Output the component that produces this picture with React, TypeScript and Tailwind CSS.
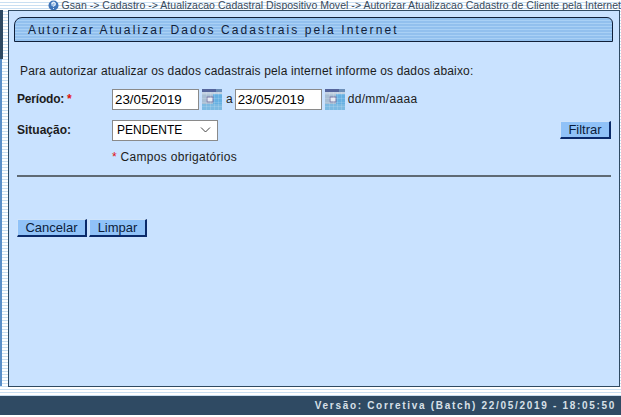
const sans = "font-['Liberation_Sans',Arial,sans-serif]";

function CalendarIcon() {
  return (
    <svg width="20" height="21" viewBox="0 0 20 21" className="shrink-0">
      <rect x="0" y="0" width="20" height="21" fill="#8fc6e8" />
      <rect x="0" y="0" width="14" height="3" fill="#55659c" />
      <rect x="14" y="0" width="6" height="3" fill="#6d8fb8" />
      <rect x="0" y="3" width="20" height="2" fill="#c4d2e2" />
      <rect x="0" y="5" width="11" height="16" fill="#a9bfd4" />
      <rect x="11" y="5" width="9" height="16" fill="#66b0e2" />
      <rect x="0" y="15" width="20" height="6" fill="#7cbae2" />
      <rect x="5" y="8" width="6" height="5" fill="#e6ebf4" stroke="#7476a4" strokeWidth="1" />
      <path d="M0 5.5h20M0 9.5h20M0 13.5h20M0 17.5h20M4.5 3v18M8.5 3v18M12.5 3v18M16.5 3v18" stroke="#ffffff" strokeOpacity="0.14" strokeWidth="1" />
    </svg>
  );
}

function DateInput() {
  return (
    <input
      readOnly
      value="23/05/2019"
      className={`${sans} w-[87px] h-[21px] bg-white border border-[#8a8a8a] px-[2px] text-[13.33px] text-black outline-none`}
    />
  );
}

function Btn({ children, w }: { children: string; w: string }) {
  return (
    <button
      className={`${sans} ${w} h-[18px] flex items-center justify-center bg-[#90c2f8] border-t border-l border-t-[#cfe4fb] border-l-[#cfe4fb] border-r-[2px] border-b-[2px] border-r-[#0a2a6a] border-b-[#0a2a6a] text-[13px] text-[#0c1c3a]`}
    >
      {children}
    </button>
  );
}

export default function App() {
  return (
    <div className={`${sans} w-[621px] h-[417px] flex flex-col overflow-hidden bg-white`}>
      <div className="h-[396px] flex flex-col bg-[repeating-linear-gradient(to_bottom,#ffffff_0,#ffffff_2px,#c9dff2_2px,#c9dff2_3px)]">
        <div className="h-[10px] flex items-center justify-end gap-[3px] whitespace-nowrap text-[#3a4a5a]">
          <svg width="11" height="11" viewBox="0 0 11 11" className="shrink-0">
            <circle cx="5.5" cy="5.5" r="5" fill="#3f74b8" />
            <circle cx="5.5" cy="4" r="2.5" fill="#9fc0e6" />
            <path d="M4 4a1.6 1.6 0 1 1 2.3 1.4c-.5.3-.8.5-.8 1.1M5.5 8v.8" stroke="#fff" strokeWidth="1" fill="none" />
          </svg>
          <span className="text-[10.5px] tracking-[0.035px] leading-[10px]">
            Gsan -&gt; Cadastro -&gt; Atualizacao Cadastral Dispositivo Movel -&gt; Autorizar Atualizacao Cadastro de Cliente pela Internet
          </span>
        </div>
        <div className="flex-1 flex min-h-0">
          <div className="w-[8px] pb-[10px] flex flex-col">
            <div className="w-[3px] h-[49px] bg-[#2f4a63]" />
            <div className="w-[2px] flex-1 bg-[#5b8fc8]" />
          </div>
          <div className="w-[612px] h-[377px] border border-[#2f4a63] bg-[#c9e2ff] pl-[5px] pr-[6px] pt-[6px]">
            <div className="h-[25px] flex items-center pl-[13px] border border-[#10203a] rounded-tl-[8px] rounded-tr-[6px] bg-[repeating-linear-gradient(to_bottom,#92c0ee_0,#92c0ee_2px,#a9d0f5_2px,#a9d0f5_3px)] text-[12px] tracking-[2.09px] text-[#10203a]">
              Autorizar Atualizar Dados Cadastrais pela Internet
            </div>
            <p className="mt-[22px] ml-[6px] h-[14px] leading-[14px] text-[12px] tracking-[0.15px] text-[#1c1c1c]">
              Para autorizar atualizar os dados cadastrais pela internet informe os dados abaixo:
            </p>
            <div className="mt-[10px] flex items-center h-[22px]">
              <div className="w-[95px] ml-[3px] text-[12px] font-bold tracking-[-0.2px] text-[#1c1c1c]">
                Período:<span className="ml-[3px] text-[#e01010]">*</span>
              </div>
              <DateInput />
              <div className="w-[3px]" />
              <CalendarIcon />
              <span className="ml-[4px] mr-[2px] text-[12px] text-[#1c1c1c]">a</span>
              <DateInput />
              <div className="w-[3px]" />
              <CalendarIcon />
              <span className="ml-[3px] text-[12px] tracking-[0.3px] text-[#1c1c1c]">dd/mm/aaaa</span>
            </div>
            <div className="mt-[9px] flex items-center h-[22px]">
              <div className="w-[95px] ml-[3px] text-[12px] font-bold text-[#1c1c1c]">Situação:</div>
              <div className="w-[106px] h-[21px] bg-white border border-[#8a8a8a] flex items-center justify-between pl-[4px] pr-[6px] text-[12px] text-black">
                PENDENTE
                <svg width="11" height="6" viewBox="0 0 11 6">
                  <path d="M1 0.5l4.5 4.5 4.5-4.5" stroke="#444" strokeWidth="1" fill="none" />
                </svg>
              </div>
              <div className="flex-1" />
              <div className="mr-[2px]">
                <Btn w="w-[51px]">Filtrar</Btn>
              </div>
            </div>
            <div className="mt-[9px] ml-[98px] h-[14px] leading-[14px] text-[12px] tracking-[0.3px] text-[#1c1c1c]">
              <span className="text-[#e01010]">*</span> Campos obrigatórios
            </div>
            <div className="mt-[11px] ml-[3px] mr-[2px] h-[2px] bg-[#5f6a74]" />
            <div className="mt-[42px] ml-[3px] flex gap-[2px]">
              <Btn w="w-[70px]">Cancelar</Btn>
              <Btn w="w-[58px]">Limpar</Btn>
            </div>
          </div>
        </div>
      </div>
      <div className="h-[19px] bg-[#2f4a63] flex items-center justify-end pr-[5px] text-[10px] font-bold tracking-[1.69px] text-[#d8e0e8]">
        Versão: Corretiva (Batch) 22/05/2019 - 18:05:50
      </div>
    </div>
  );
}
